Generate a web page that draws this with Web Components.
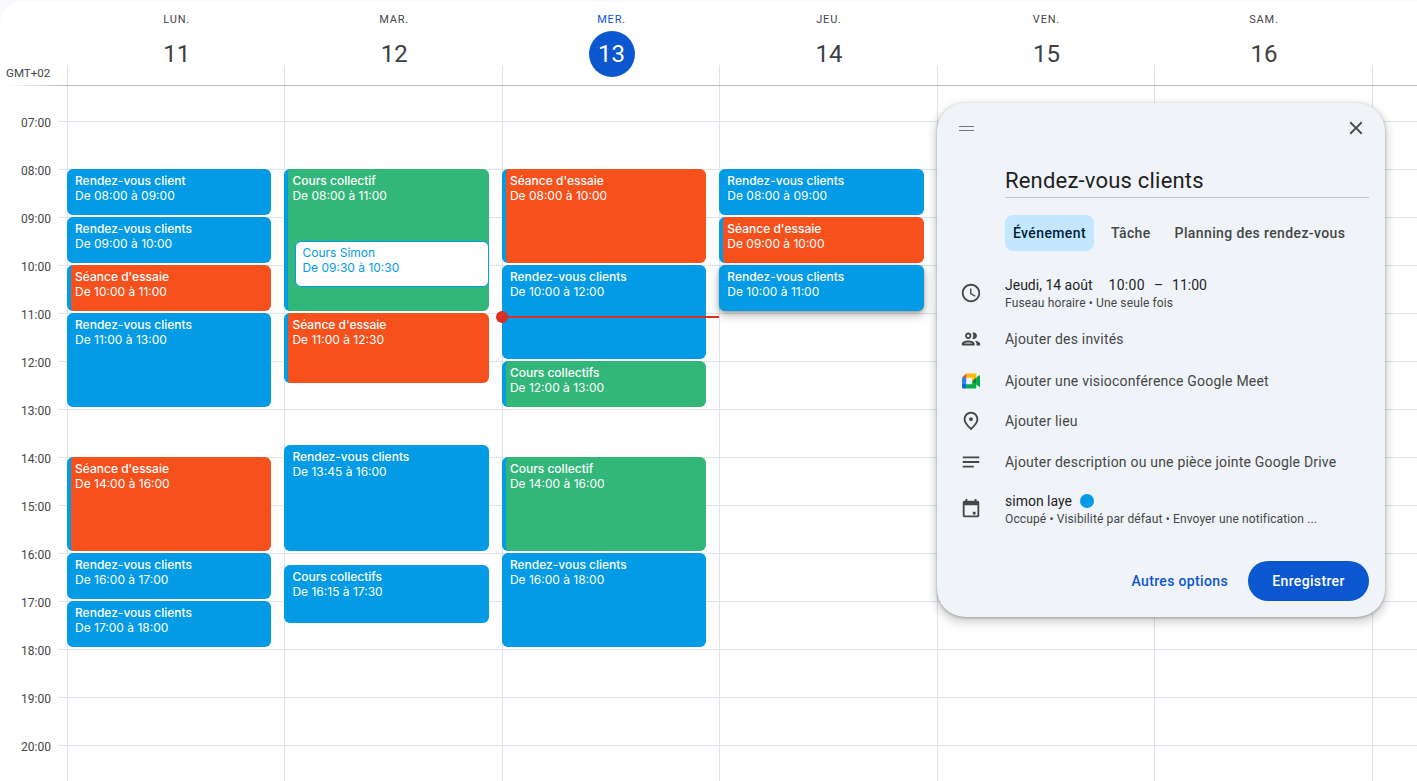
<!DOCTYPE html>
<html lang="fr">
<head>
<meta charset="utf-8">
<title>Agenda</title>
<style>
  html, body { margin: 0; height: 100%; overflow: hidden; background: #f8fafd; }
  body { font-family: Roboto, "Liberation Sans", sans-serif; }
</style>
</head>
<body>
<cal-app>
  <day-head slot="head" name="LUN." num="11"></day-head>
  <day-head slot="head" name="MAR." num="12"></day-head>
  <day-head slot="head" name="MER." num="13" today></day-head>
  <day-head slot="head" name="JEU." num="14"></day-head>
  <day-head slot="head" name="VEN." num="15"></day-head>
  <day-head slot="head" name="SAM." num="16"></day-head>
  <day-head slot="head"></day-head>

  <cal-day slot="days">
    <cal-event label="Rendez-vous client" start="08:00" end="09:00" color="blue"></cal-event>
    <cal-event label="Rendez-vous clients" start="09:00" end="10:00" color="blue"></cal-event>
    <cal-event label="Séance d'essaie" start="10:00" end="11:00" color="orange"></cal-event>
    <cal-event label="Rendez-vous clients" start="11:00" end="13:00" color="blue"></cal-event>
    <cal-event label="Séance d'essaie" start="14:00" end="16:00" color="orange"></cal-event>
    <cal-event label="Rendez-vous clients" start="16:00" end="17:00" color="blue"></cal-event>
    <cal-event label="Rendez-vous clients" start="17:00" end="18:00" color="blue"></cal-event>
  </cal-day>
  <cal-day slot="days">
    <cal-event label="Cours collectif" start="08:00" end="11:00" color="green"></cal-event>
    <cal-event label="Cours Simon" start="09:30" end="10:30" color="outline"></cal-event>
    <cal-event label="Séance d'essaie" start="11:00" end="12:30" color="orange"></cal-event>
    <cal-event label="Rendez-vous clients" start="13:45" end="16:00" color="blue"></cal-event>
    <cal-event label="Cours collectifs" start="16:15" end="17:30" color="blue"></cal-event>
  </cal-day>
  <cal-day slot="days">
    <cal-event label="Séance d'essaie" start="08:00" end="10:00" color="orange"></cal-event>
    <cal-event label="Rendez-vous clients" start="10:00" end="12:00" color="blue"></cal-event>
    <cal-event label="Cours collectifs" start="12:00" end="13:00" color="green"></cal-event>
    <cal-event label="Cours collectif" start="14:00" end="16:00" color="green"></cal-event>
    <cal-event label="Rendez-vous clients" start="16:00" end="18:00" color="blue"></cal-event>
    <now-line></now-line>
  </cal-day>
  <cal-day slot="days">
    <cal-event label="Rendez-vous clients" start="08:00" end="09:00" color="blue"></cal-event>
    <cal-event label="Séance d'essaie" start="09:00" end="10:00" color="orange"></cal-event>
    <cal-event label="Rendez-vous clients" start="10:00" end="11:00" color="blue" raised></cal-event>
  </cal-day>
  <cal-day slot="days"></cal-day>
  <cal-day slot="days"></cal-day>
  <cal-day slot="days"></cal-day>

  <event-dialog slot="dialog"></event-dialog>
</cal-app>

<script>
  // quarter hour grid: the body starts at 06:15, one row = 15 minutes = 12px
  const toRow = (t) => {
    const [h, m] = t.split(":").map(Number);
    return (h * 60 + m - 375) / 15 + 1;
  };

  customElements.define(
    "cal-app",
    class extends HTMLElement {
      constructor() {
        super();
        const shadow = this.attachShadow({ mode: "open" });
        const hours = [];
        for (let h = 7; h <= 20; h++) {
          const label = String(h).padStart(2, "0") + ":00";
          hours.push(`<span style="grid-row: ${toRow(label) - 2} / span 4">${label}</span>`);
        }
        shadow.innerHTML = `
        <style>
          :host {
            display: block;
            position: relative;
            height: 780px;
            margin-top: 1px;
            background: #fff;
            border-top-left-radius: 24px;
            overflow: hidden;
          }
          .cols {
            display: grid;
            grid-template-columns: 67px repeat(6, 217.45px) 1fr;
          }
          .head { height: 84px; }
          .gmt {
            align-self: end;
            padding: 0 0 5px 6px;
            font-size: 11.6px;
            line-height: 14px;
            color: #444746;
            white-space: nowrap;
          }
          .rule {
            height: 1px;
            background: linear-gradient(to right, transparent 6px, #b7b9bc 67px);
          }
          .body {
            height: 696px;
            overflow: hidden;
            background-image: linear-gradient(#dde3ea 1px, transparent 1px);
            background-size: 100% 48px;
            background-position: 59px 35px;
            background-repeat: repeat-y;
          }
          .hours {
            display: grid;
            grid-template-rows: repeat(58, 12px);
            margin-top: -1px;
          }
          .hours span {
            align-self: center;
            padding: 4px 16px 0 0;
            text-align: right;
            font-size: 12px;
            line-height: 14px;
            color: #444746;
          }
          ::slotted(cal-day) { margin-top: -1px; }
        </style>
        <div class="cols head">
          <div class="gmt">GMT+02</div>
          <slot name="head"></slot>
        </div>
        <div class="rule"></div>
        <div class="cols body">
          <div class="hours">${hours.join("")}</div>
          <slot name="days"></slot>
        </div>
        <slot name="dialog"></slot>
        `;
      }
    }
  );

  customElements.define(
    "day-head",
    class extends HTMLElement {
      constructor() {
        super();
        const shadow = this.attachShadow({ mode: "open" });
        const name = this.getAttribute("name") || "";
        const num = this.getAttribute("num") || "";
        shadow.innerHTML = `
        <style>
          :host {
            display: grid;
            grid-template-rows: 64px 20px;
            text-align: center;
            color: #444746;
          }
          .top {
            display: flex;
            flex-direction: column;
            align-items: center;
            padding-left: 2px;
          }
          .name {
            margin-top: 12px;
            font-size: 11px;
            line-height: 14px;
            letter-spacing: 0.8px;
          }
          .num {
            width: 46px;
            height: 46px;
            margin-top: 4px;
            border-radius: 50%;
            font-size: 24px;
            line-height: 46px;
            color: #3c4043;
            flex: none;
          }
          :host([today]) .name { color: #0b57d0; }
          :host([today]) .num { background: #0b57d0; color: #fff; }
          .line { background: linear-gradient(to right, #dde3ea 1px, transparent 1px); }
        </style>
        <div class="top">
          <div class="name">${name}</div>
          <div class="num">${num}</div>
        </div>
        <div class="line"></div>
        `;
      }
    }
  );

  customElements.define(
    "cal-day",
    class extends HTMLElement {
      constructor() {
        super();
        const shadow = this.attachShadow({ mode: "open" });
        shadow.innerHTML = `
        <style>
          :host {
            display: grid;
            position: relative;
            grid-template-rows: repeat(58, 12px);
            grid-template-columns: minmax(0, 1fr);
            background: linear-gradient(to right, #dde3ea 1px, transparent 1px);
          }
        </style>
        <slot></slot>
        `;
      }
    }
  );

  customElements.define(
    "cal-event",
    class extends HTMLElement {
      constructor() {
        super();
        const shadow = this.attachShadow({ mode: "open" });
        const start = this.getAttribute("start");
        const end = this.getAttribute("end");
        const colors = { blue: "#039be5", green: "#33b679", orange: "#f6511d", outline: "#fff" };
        const color = this.getAttribute("color");
        this.style.gridRow = `${toRow(start)} / ${toRow(end)}`;
        this.style.gridColumn = "1";
        shadow.innerHTML = `
        <style>
          :host {
            display: block;
            min-width: 0;
            margin: 0 13px 2px 0;
            box-sizing: border-box;
            padding: 4px 4px 0;
            border-left: 4px solid #039be5;
            border-radius: 6px;
            background: ${colors[color]};
            color: #fff;
            font-family: Inter, Roboto, sans-serif;
            font-size: 12px;
            line-height: 15px;
            overflow: hidden;
            white-space: nowrap;
          }
          :host([color="outline"]) {
            margin-left: 11px;
            z-index: 1;
            border: 1px solid #039be5;
            padding: 3px 6px 0;
            color: #039be5;
          }
          :host([raised]) {
            box-shadow: 0 4px 10px rgba(60, 64, 67, 0.4), 0 1px 3px rgba(60, 64, 67, 0.3);
          }
          .label { font-weight: 500; }
          :host([color="outline"]) .label { font-weight: 400; }
        </style>
        <div class="label">${this.getAttribute("label")}</div>
        <div>De ${start} à ${end}</div>
        `;
      }
    }
  );

  customElements.define(
    "now-line",
    class extends HTMLElement {
      constructor() {
        super();
        const shadow = this.attachShadow({ mode: "open" });
        shadow.innerHTML = `
        <style>
          :host {
            position: absolute;
            left: 0;
            right: 0;
            top: 231px;
            height: 2px;
            background: #d93025;
            z-index: 2;
          }
          i {
            position: absolute;
            left: -6px;
            top: -5px;
            width: 12px;
            height: 12px;
            border-radius: 50%;
            background: #d93025;
          }
        </style>
        <i></i>
        `;
      }
    }
  );

  const ICONS = {
    clock: `<path d="M11.99 2C6.47 2 2 6.48 2 12s4.47 10 9.99 10C17.52 22 22 17.52 22 12S17.52 2 11.99 2zM12 20c-4.42 0-8-3.58-8-8s3.58-8 8-8 8 3.58 8 8-3.58 8-8 8zm.5-13H11v6l5.25 3.15.75-1.23-4.5-2.67z"/>`,
    people: `<path d="M9 13.75c-2.34 0-7 1.17-7 3.5V19h14v-1.75c0-2.33-4.66-3.5-7-3.5zM4.34 17c.84-.58 2.87-1.25 4.66-1.25s3.82.67 4.66 1.25H4.34zM9 12c1.93 0 3.5-1.57 3.5-3.5S10.93 5 9 5 5.5 6.57 5.5 8.5 7.07 12 9 12zm0-5c.83 0 1.5.67 1.5 1.5S9.83 10 9 10s-1.5-.67-1.5-1.5S8.17 7 9 7zm7.04 6.81c1.16.84 1.96 1.96 1.96 3.44V19h4v-1.75c0-2.02-3.5-3.17-5.96-3.44zM15 12c1.93 0 3.5-1.57 3.5-3.5S16.93 5 15 5c-.54 0-1.04.13-1.5.35.63.89 1 1.98 1 3.15s-.37 2.26-1 3.15c.46.22.96.35 1.5.35z"/>`,
    meet: `<g transform="translate(2.2 3.9) scale(.2246)"><path fill="#00832d" d="M49.5 36l8.53 9.75 11.47 7.33 2-17.02-2-16.64-11.69 6.44z"/><path fill="#0066da" d="M0 51.5V66c0 3.315 2.685 6 6 6h14.5l3-10.96-3-9.54-9.95-3z"/><path fill="#e94235" d="M20.5 0L0 20.5l10.55 3 9.95-3 2.95-9.41z"/><path fill="#2684fc" d="M20.5 20.5H0v31h20.5z"/><path fill="#00ac47" d="M82.6 8.68L69.5 19.42v33.66l13.16 10.79c1.97 1.54 4.85.135 4.85-2.37V11c0-2.535-2.945-3.925-4.91-2.32zM49.5 36v15.5h-29V72h43c3.315 0 6-2.685 6-6V53.08z"/><path fill="#ffba00" d="M63.5 0h-43v20.5h29V36l20-16.57V6c0-3.315-2.685-6-6-6z"/></g>`,
    place: `<path d="M12 12c-1.1 0-2-.9-2-2s.9-2 2-2 2 .9 2 2-.9 2-2 2zm6-1.8C18 6.57 15.35 4 12 4s-6 2.57-6 6.2c0 2.34 1.95 5.44 6 9.14 4.05-3.7 6-6.8 6-9.14zM12 2c4.2 0 8 3.22 8 8.2 0 3.32-2.67 7.25-8 11.8-5.33-4.55-8-8.48-8-11.8C4 5.22 7.8 2 12 2z"/>`,
    notes: `<path d="M3 18h12v-2H3v2zM3 6v2h18V6H3zm0 7h18v-2H3v2z"/>`,
    event: `<path d="M17 15h-3v3h3v-3zM16 1v2H8V1H6v2H5c-1.11 0-1.99.9-1.99 2L3 19c0 1.1.89 2 2 2h14c1.1 0 2-.9 2-2V5c0-1.1-.9-2-2-2h-1V1h-2zm3 18H5V8h14v11z"/>`,
  };

  customElements.define(
    "dialog-row",
    class extends HTMLElement {
      constructor() {
        super();
        const shadow = this.attachShadow({ mode: "open" });
        shadow.innerHTML = `
        <style>
          :host {
            display: grid;
            grid-template-columns: 24px minmax(0, 1fr);
            column-gap: 22px;
            align-items: center;
            min-height: 40px;
            padding: 0 16px 0 22px;
            font-size: 14px;
            line-height: 20px;
            letter-spacing: 0.2px;
            color: #444746;
          }
          svg { width: 22px; height: 22px; margin: 1px; fill: #444746; display: block; }
        </style>
        <svg viewBox="0 0 24 24">${ICONS[this.getAttribute("icon")]}</svg>
        <div><slot></slot></div>
        `;
      }
    }
  );

  customElements.define(
    "event-dialog",
    class extends HTMLElement {
      constructor() {
        super();
        const shadow = this.attachShadow({ mode: "open" });
        shadow.innerHTML = `
        <style>
          :host {
            position: absolute;
            left: 937px;
            top: 102px;
            z-index: 5;
            width: 448px;
            height: 514px;
            box-sizing: border-box;
            display: flex;
            flex-direction: column;
            border-radius: 28px;
            background: #f0f4f9;
            box-shadow: 0 4px 8px 3px rgba(0, 0, 0, 0.15), 0 1px 3px rgba(0, 0, 0, 0.3);
          }
          .bar {
            display: flex;
            align-items: center;
            justify-content: space-between;
            height: 50px;
            padding: 0 18px 0 22px;
            flex: none;
          }
          .handle { width: 15px; height: 3px; border-top: 1.5px solid #747775; border-bottom: 1.5px solid #747775; }
          .close { width: 22px; height: 22px; fill: #444746; display: block; }
          .title {
            margin: 0 16px 0 68px;
            height: 45px;
            box-sizing: border-box;
            padding-top: 13px;
            border-bottom: 1px solid #c4c7c5;
            font-size: 22px;
            line-height: 30px;
            letter-spacing: 0.2px;
            color: #1f1f1f;
          }
          .tabs {
            display: flex;
            margin: 17px 0 0 68px;
            font-size: 14px;
            font-weight: 500;
            letter-spacing: 0.38px;
            color: #444746;
          }
          .tabs span { height: 36px; line-height: 36px; padding: 0 8px; border-radius: 8px; }
          .tabs .on { background: #c2e7ff; color: #001d35; margin-right: 9px; }
          .tabs span:nth-child(2) { margin-right: 8px; }
          .list { margin-top: 22px; }
          .sub { font-size: 12px; line-height: 16px; letter-spacing: 0.13px; }
          .main { color: #1f1f1f; letter-spacing: 0; }
          .when { display: flex; }
          .when b { font-weight: 400; margin-left: 16px; letter-spacing: 0.3px; }
          .when i { font-style: normal; margin: 0 9px; }
          .owner { display: flex; align-items: center; gap: 8px; }
          .dot { width: 14px; height: 14px; border-radius: 50%; background: #039be5; }
          dialog-row:nth-child(2) { margin-top: 6px; }
          dialog-row:nth-child(3) { margin-top: 2px; }
          dialog-row:nth-child(5) { margin-top: 1px; }
          dialog-row:nth-child(6) { margin-top: 7px; }
          .foot {
            margin-top: auto;
            padding: 0 16px 16px;
            display: flex;
            justify-content: flex-end;
            align-items: center;
            gap: 20px;
            font-size: 14px;
            font-weight: 500;
            letter-spacing: 0.35px;
          }
          .more { color: #0b57d0; }
          .save {
            width: 121px;
            height: 40px;
            line-height: 40px;
            text-align: center;
            border-radius: 20px;
            background: #0b57d0;
            color: #fff;
          }
        </style>
        <div class="bar">
          <div class="handle"></div>
          <svg class="close" viewBox="0 0 24 24"><path d="M19 6.41L17.59 5 12 10.59 6.41 5 5 6.41 10.59 12 5 17.59 6.41 19 12 13.41 17.59 19 19 17.59 13.41 12z"/></svg>
        </div>
        <div class="title">Rendez-vous clients</div>
        <div class="tabs">
          <span class="on">Événement</span>
          <span>Tâche</span>
          <span>Planning des rendez-vous</span>
        </div>
        <div class="list">
          <dialog-row icon="clock">
            <div class="main when">Jeudi, 14 août<b>10:00</b><i>–</i>11:00</div>
            <div class="sub">Fuseau horaire • Une seule fois</div>
          </dialog-row>
          <dialog-row icon="people">Ajouter des invités</dialog-row>
          <dialog-row icon="meet">Ajouter une visioconférence Google Meet</dialog-row>
          <dialog-row icon="place">Ajouter lieu</dialog-row>
          <dialog-row icon="notes">Ajouter description ou une pièce jointe Google Drive</dialog-row>
          <dialog-row icon="event">
            <div class="main owner">simon laye<span class="dot"></span></div>
            <div class="sub">Occupé • Visibilité par défaut • Envoyer une notification ...</div>
          </dialog-row>
        </div>
        <div class="foot">
          <span class="more">Autres options</span>
          <span class="save">Enregistrer</span>
        </div>
        `;
      }
    }
  );
</script>
</body>
</html>
